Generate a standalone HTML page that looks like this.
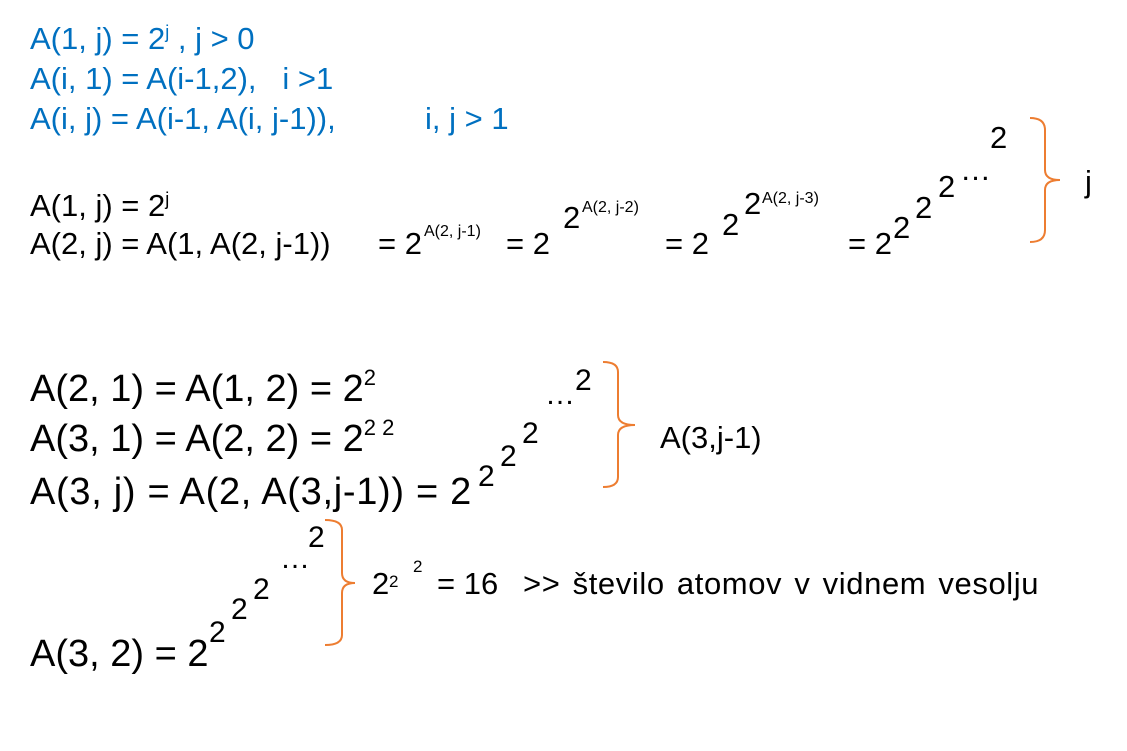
<!DOCTYPE html>
<html><head><meta charset="utf-8"><style>
body{margin:0;background:#fff;width:1127px;height:751px;position:relative;overflow:hidden;font-family:"Liberation Sans",Arial,sans-serif;color:#000}
.t{position:absolute;line-height:1;white-space:pre;font-size:31px}
.b{color:#0070c0}
.s{font-size:16px}
.c{font-size:38px}
.p{font-size:30px}
.sup{position:relative;font-size:22px;top:-16px}
</style></head><body>
<div class="t b" style="left:30px;top:23px">A(1, j) = 2<span style="font-size:18px;position:relative;top:-11px">j</span> , j &gt; 0</div>
<div class="t b" style="left:30px;top:63px">A(i, 1) = A(i-1,2),   i &gt;1</div>
<div class="t b" style="left:30px;top:103px">A(i, j) = A(i-1, A(i, j-1)),</div>
<div class="t b" style="left:425px;top:103px">i, j &gt; 1</div>

<div class="t" style="left:30px;top:190px">A(1, j) = 2<span style="font-size:18px;position:relative;top:-11px">j</span></div>
<div class="t" style="left:30px;top:228px">A(2, j) = A(1, A(2, j-1))</div>
<div class="t" style="left:378px;top:228px">= 2</div>
<div class="t s" style="left:424px;top:224px">A(2, j-1)</div>
<div class="t" style="left:506px;top:228px">= 2</div>
<div class="t" style="left:563px;top:202px">2</div>
<div class="t s" style="left:582px;top:200px">A(2, j-2)</div>
<div class="t" style="left:665px;top:228px">= 2</div>
<div class="t" style="left:722px;top:209px">2</div>
<div class="t" style="left:744px;top:188px">2</div>
<div class="t s" style="left:762px;top:191px">A(2, j-3)</div>
<div class="t" style="left:848px;top:228px">= 2</div>
<div class="t" style="left:893px;top:212px">2</div>
<div class="t" style="left:915px;top:192px">2</div>
<div class="t" style="left:938px;top:171px">2</div>
<div class="t" style="left:960px;top:154px">…</div>
<div class="t" style="left:990px;top:122px">2</div>
<div class="t" style="left:1085px;top:166px">j</div>

<div class="t c" style="left:30px;top:370px">A(2, 1) = A(1, 2) = 2<span class="sup">2</span></div>
<div class="t c" style="left:30px;top:420px">A(3, 1) = A(2, 2) = 2<span class="sup">2 2</span></div>
<div class="t c" style="left:30px;top:473px;letter-spacing:0.7px">A(3, j) = A(2, A(3,j-1)) = 2</div>
<div class="t p" style="left:478px;top:462px">2</div>
<div class="t p" style="left:500px;top:442px">2</div>
<div class="t p" style="left:522px;top:419px">2</div>
<div class="t p" style="left:545px;top:380px">…</div>
<div class="t p" style="left:575px;top:366px">2</div>
<div class="t" style="left:660px;top:422px;font-size:31px">A(3,j-1)</div>

<div class="t c" style="left:30px;top:635px">A(3, 2) = 2</div>
<div class="t p" style="left:209px;top:618px">2</div>
<div class="t p" style="left:231px;top:595px">2</div>
<div class="t p" style="left:253px;top:575px">2</div>
<div class="t p" style="left:280px;top:544px">…</div>
<div class="t p" style="left:308px;top:523px">2</div>

<div class="t" style="left:372px;top:568px">2</div>
<div class="t" style="left:389px;top:573px;font-size:17px">2</div>
<div class="t" style="left:413px;top:558px;font-size:17px">2</div>
<div class="t" style="left:437px;top:568px">= 16</div>
<div class="t" style="left:523px;top:568px;letter-spacing:0.6px;word-spacing:3px">&gt;&gt; število atomov v vidnem vesolju</div>

<svg width="1127" height="751" style="position:absolute;left:0;top:0" fill="none" stroke="#ed7d31" stroke-width="2">
<path d="M1030,118 Q1045,118 1045,130 L1045,170 Q1045,180 1060,180 Q1045,180 1045,190 L1045,230 Q1045,242 1030,242"/>
<path d="M603,362 Q618,362 618,372 L618,415 Q618,425 635,425 Q618,425 618,435 L618,477 Q618,487 603,487"/>
<path d="M325,520 Q342,520 342,530 L342,573 Q342,583 355,583 Q342,583 342,593 L342,635 Q342,645 325,645"/>
</svg>
</body></html>
